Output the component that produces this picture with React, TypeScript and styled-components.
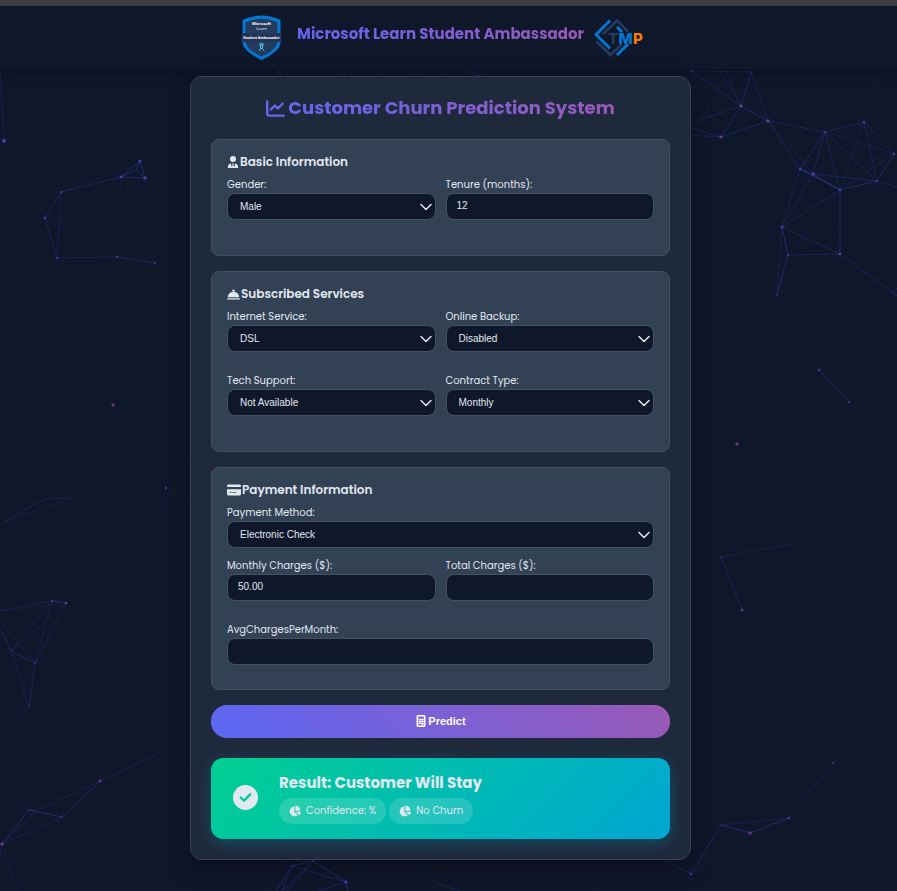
import React from "react";
import styled, { createGlobalStyle } from "styled-components";
import {
  FaBellConcierge,
  FaCalculator,
  FaChartLine,
  FaChartPie,
  FaCircleCheck,
  FaCreditCard,
  FaUserTie,
} from "react-icons/fa6";

const brandFont = `Poppins, Inter, "Open Sans", sans-serif`;
const controlFont = `"Liberation Sans", Arial, sans-serif`;

const GlobalStyle = createGlobalStyle`
  *, *::before, *::after { box-sizing: border-box; }
  body {
    margin: 0;
    background: #0f172a;
    color: #e2e8f0;
    font-family: ${brandFont};
  }
`;

const Page = styled.div`
  position: relative;
  min-height: 100vh;
  overflow: hidden;
  border-top: 6px solid #3e3f46;
`;

const Network = styled.svg`
  position: absolute;
  top: -6px;
  left: 0;
  width: 100%;
  height: 891px;
`;

const Header = styled.header`
  position: relative;
  display: flex;
  justify-content: center;
  align-items: center;
  gap: 10px;
  height: 63px;
  padding-right: 16px;
  background: #0f172a;
  box-shadow: 0 2px 10px rgba(13, 16, 32, 0.9);
`;

const BadgeArt = styled.svg`
  width: 50px;
  height: 46px;
`;

const TeamArt = styled.svg`
  width: 50px;
  height: 40px;
`;

const GradientText = styled.span`
  background: linear-gradient(45deg, #6366f1, #9b59b6);
  background-clip: text;
  -webkit-background-clip: text;
  color: transparent;
`;

const Brand = styled.h2`
  margin: 0 0 8px;
  font-size: 15px;
  line-height: 24px;
  font-weight: 700;
  white-space: nowrap;
`;

const Main = styled.main`
  position: relative;
  padding: 7px 16px 31px 0;
`;

const Card = styled.form`
  max-width: 501px;
  margin: 0 auto;
  padding: 20px;
  background: #1e293b;
  border: 1px solid #374354;
  border-radius: 12px;
  box-shadow: 0 8px 20px rgba(12, 12, 24, 0.6);
`;

const Title = styled.h1`
  display: flex;
  justify-content: center;
  align-items: center;
  gap: 3px;
  margin: 0 0 20px;
  font-size: 18px;
  line-height: 22px;
  font-weight: 700;
  color: #6366f1;
  white-space: nowrap;
`;

const Section = styled.section`
  margin-bottom: 15px;
  padding: 15px;
  background: #334155;
  border: 1px solid #43505f;
  border-radius: 8px;
`;

const SectionTitle = styled.h3`
  display: flex;
  align-items: center;
  gap: 1px;
  margin: 0 0 7px;
  font-size: 12px;
  line-height: 14px;
  font-weight: 600;
`;

const Grid = styled.div`
  display: grid;
  grid-template-columns: 1fr 1fr;
  column-gap: 10px;
`;

const FieldBox = styled.div<{ $tight?: boolean }>`
  display: flex;
  flex-direction: column;
  margin-bottom: ${(p) => (p.$tight ? 9 : 20)}px;
`;

const Label = styled.label`
  font-size: 10px;
  line-height: 17px;
`;

const Select = styled.select`
  appearance: none;
  height: 27px;
  padding: 0 24px 1px 12px;
  border: 1px solid #45525f;
  border-radius: 8px;
  color: #e2e8f0;
  font-family: ${controlFont};
  font-size: 10px;
  background: #0f172a
    url("data:image/svg+xml,%3Csvg xmlns='http://www.w3.org/2000/svg' viewBox='0 0 12 8'%3E%3Cpath d='M1 1.5l5 5 5-5' fill='none' stroke='%23e2e8f0' stroke-width='1.5' stroke-linecap='round' stroke-linejoin='round'/%3E%3C/svg%3E")
    no-repeat right 3px center / 12px 8px;
`;

const Input = styled.input`
  width: 100%;
  height: 27px;
  padding: 0 10px 2px;
  border: 1px solid #45525f;
  border-radius: 8px;
  background: #0f172a;
  color: #e2e8f0;
  font-family: ${controlFont};
  font-size: 10px;
`;

const PredictButton = styled.button`
  display: flex;
  justify-content: center;
  align-items: center;
  gap: 1px;
  width: 100%;
  height: 33px;
  padding: 0 0 1px;
  border: 0;
  border-radius: 16px;
  background: linear-gradient(45deg, #5b67f4, #9b59b6);
  color: #fff;
  font-family: ${controlFont};
  font-size: 11px;
  font-weight: 700;
`;

const Result = styled.section`
  display: flex;
  align-items: center;
  gap: 21px;
  margin-top: 20px;
  min-height: 81px;
  padding: 13px 22px 15px;
  border-radius: 12px;
  background: linear-gradient(135deg, #00d092, #00a6d2);
  box-shadow: 0 4px 15px rgba(0, 166, 210, 0.3);
`;

const ResultBody = styled.div`
  display: flex;
  flex-direction: column;
  gap: 5px;
`;

const ResultTitle = styled.h2`
  margin: 0;
  font-size: 15px;
  line-height: 21px;
  font-weight: 700;
`;

const Pills = styled.div`
  display: flex;
  gap: 3px;
`;

const Pill = styled.span`
  display: flex;
  align-items: center;
  gap: 5px;
  height: 26px;
  padding: 0 10px;
  border-radius: 13px;
  background: rgba(255, 255, 255, 0.15);
  font-size: 10px;
`;

type Line = [number, number, number, number, number];

const lines: Line[] = [
  [0, 70, 4, 141, 0.25], [4, 141, 61, 192, 0.12], [0, 138, 4, 141, 0.4],
  [61, 192, 121, 177, 0.35], [61, 192, 136, 165, 0.12], [121, 177, 140, 161, 0.5],
  [121, 177, 145, 178, 0.4], [140, 161, 145, 178, 0.5], [136, 170, 140, 161, 0.4],
  [136, 170, 145, 178, 0.4], [121, 177, 136, 170, 0.4],
  [61, 192, 45, 218, 0.35], [45, 218, 57, 258, 0.35], [61, 192, 57, 258, 0.25],
  [57, 258, 117, 257, 0.3], [117, 257, 155, 263, 0.4], [121, 177, 117, 257, 0.12],
  [145, 178, 117, 257, 0.12], [145, 178, 155, 263, 0.08], [45, 218, 117, 257, 0.1],
  [5, 522, 44, 499, 0.35], [44, 499, 71, 498, 0.35], [5, 522, 71, 498, 0.2],
  [166, 488, 144, 558, 0.15], [166, 488, 191, 502, 0.15], [166, 488, 191, 458, 0.08],
  [0, 611, 52, 601, 0.3], [0, 611, 66, 603, 0.15], [52, 601, 66, 603, 0.5],
  [0, 622, 35, 663, 0.25], [0, 629, 11, 651, 0.4], [11, 651, 35, 663, 0.4],
  [11, 651, 52, 601, 0.25], [11, 651, 66, 603, 0.2], [35, 663, 52, 601, 0.25],
  [35, 663, 66, 603, 0.25], [66, 603, 113, 666, 0.12], [35, 663, 113, 666, 0.15],
  [11, 651, 29, 708, 0.25], [35, 663, 29, 708, 0.35], [29, 708, 0, 718, 0.1],
  [29, 708, 0, 742, 0.15], [0, 781, 29, 810, 0.25], [0, 800, 29, 810, 0.12],
  [29, 810, 36, 811, 0.5], [29, 810, 62, 817, 0.5], [29, 810, 2, 844, 0.45],
  [36, 811, 2, 844, 0.35], [62, 817, 2, 844, 0.25], [62, 817, 100, 781, 0.4],
  [36, 811, 100, 781, 0.25], [100, 781, 160, 753, 0.25], [160, 753, 191, 771, 0.15],
  [2, 844, 18, 891, 0.2], [2, 844, 0, 855, 0.3],
  [692, 71, 751, 72, 0.35], [692, 71, 741, 106, 0.35], [751, 72, 741, 106, 0.4],
  [751, 72, 768, 121, 0.3], [741, 106, 768, 121, 0.45], [741, 106, 721, 137, 0.4],
  [721, 137, 768, 121, 0.35], [691, 123, 741, 106, 0.3], [691, 128, 721, 137, 0.35],
  [691, 135, 721, 137, 0.3], [692, 71, 721, 137, 0.15], [725, 70, 741, 106, 0.3],
  [719, 70, 741, 106, 0.2], [768, 121, 825, 132, 0.35], [768, 121, 800, 169, 0.35],
  [768, 121, 813, 174, 0.2], [721, 137, 800, 169, 0.1],
  [825, 132, 864, 122, 0.35], [864, 122, 894, 154, 0.35], [825, 132, 800, 169, 0.4],
  [825, 132, 813, 174, 0.35], [825, 132, 840, 190, 0.3], [825, 132, 877, 181, 0.3],
  [825, 132, 894, 154, 0.2], [864, 122, 877, 181, 0.3], [864, 122, 840, 190, 0.2],
  [864, 122, 800, 169, 0.15], [864, 122, 813, 174, 0.15], [864, 122, 884, 69, 0.1],
  [894, 154, 877, 181, 0.4], [894, 154, 840, 190, 0.25], [894, 154, 813, 174, 0.12],
  [800, 169, 813, 174, 0.5], [800, 169, 840, 190, 0.6], [813, 174, 840, 190, 0.5],
  [813, 174, 877, 181, 0.35], [840, 190, 877, 181, 0.45], [877, 181, 897, 187, 0.35],
  [800, 169, 782, 227, 0.3], [813, 174, 782, 227, 0.3], [840, 190, 782, 227, 0.3],
  [840, 190, 840, 254, 0.4], [840, 190, 788, 255, 0.15], [813, 174, 840, 254, 0.12],
  [877, 181, 840, 254, 0.15], [782, 227, 840, 254, 0.35], [782, 227, 788, 255, 0.45],
  [782, 227, 777, 295, 0.3], [788, 255, 777, 295, 0.4], [788, 255, 840, 254, 0.35],
  [777, 295, 840, 254, 0.15], [840, 254, 893, 293, 0.35], [893, 293, 897, 288, 0.4],
  [893, 293, 897, 296, 0.5], [777, 295, 819, 370, 0.1], [819, 370, 849, 402, 0.4],
  [721, 557, 791, 544, 0.25], [721, 557, 742, 610, 0.35], [791, 544, 742, 610, 0.12],
  [721, 825, 789, 818, 0.25], [721, 825, 750, 833, 0.5], [750, 833, 789, 818, 0.45],
  [789, 818, 833, 763, 0.25], [721, 825, 691, 874, 0.4], [750, 833, 691, 874, 0.2],
  [721, 825, 691, 836, 0.15], [721, 825, 691, 773, 0.1], [833, 763, 897, 796, 0.07],
  [292, 866, 313, 861, 0.5], [292, 866, 346, 882, 0.4], [313, 861, 346, 882, 0.5],
  [292, 866, 276, 891, 0.45], [292, 866, 282, 891, 0.4], [313, 861, 282, 891, 0.4],
  [313, 861, 287, 891, 0.35], [346, 882, 348, 891, 0.5], [346, 882, 318, 891, 0.3],
  [346, 882, 366, 860, 0.2], [282, 860, 292, 866, 0.3], [251, 860, 260, 891, 0.12],
  [255, 860, 270, 891, 0.12], [421, 860, 436, 883, 0.2], [436, 883, 460, 891, 0.3],
  [640, 860, 598, 891, 0.15], [666, 860, 691, 874, 0.4],
  [278, 69, 281, 76, 0.5], [281, 69, 276, 76, 0.2], [346, 69, 339, 76, 0.25],
  [353, 69, 351, 76, 0.4], [373, 69, 383, 76, 0.35], [413, 69, 410, 76, 0.35],
  [427, 69, 420, 76, 0.3], [464, 69, 478, 76, 0.45], [490, 69, 478, 76, 0.45],
  [455, 69, 440, 76, 0.2], [478, 69, 478, 76, 0.4],
];

const indigo = "#4f56d8";
const purple = "#8e4ba6";
const dots: [number, number, number, string][] = [
  [4, 141, 2, indigo], [61, 192, 1, purple], [121, 177, 1.5, indigo],
  [140, 161, 1.5, indigo], [145, 178, 1.8, indigo], [45, 218, 1.2, indigo],
  [57, 258, 1, indigo], [117, 257, 1, indigo], [155, 263, 1, indigo],
  [113, 405, 1.7, purple], [166, 488, 1.2, indigo], [52, 601, 1, purple],
  [66, 603, 1.3, purple], [35, 663, 0.8, indigo], [100, 781, 1.5, purple],
  [2, 844, 1.7, purple], [62, 817, 0.8, indigo], [692, 71, 1.3, indigo],
  [751, 72, 1, indigo], [741, 106, 1.6, purple], [768, 121, 1.7, purple],
  [721, 137, 1.6, purple], [825, 132, 1, indigo], [864, 122, 1.2, indigo],
  [894, 154, 1.2, indigo], [800, 169, 1.2, indigo], [813, 174, 1.5, purple],
  [840, 190, 1.2, indigo], [877, 181, 1, indigo], [782, 227, 1.4, indigo],
  [788, 255, 1, indigo], [840, 254, 1.3, purple], [777, 295, 0.8, indigo],
  [819, 370, 1.3, indigo], [849, 402, 1, indigo], [737, 444, 1.7, purple],
  [742, 610, 1.6, purple], [721, 557, 0.8, indigo], [833, 763, 0.9, indigo],
  [789, 818, 1.2, purple], [750, 833, 1.8, purple], [691, 874, 1.2, indigo],
  [313, 861, 1.1, indigo], [346, 882, 1.6, indigo], [292, 866, 0.8, indigo],
];

function NetworkBackdrop() {
  return (
    <Network viewBox="0 0 897 891" preserveAspectRatio="xMidYMin slice" aria-hidden="true">
      <g stroke="#3f46cc" strokeWidth="1" opacity="0.85">
        {lines.map(([x1, y1, x2, y2, o], i) => (
          <line key={i} x1={x1} y1={y1} x2={x2} y2={y2} strokeOpacity={o} />
        ))}
      </g>
      {dots.map(([cx, cy, r, fill], i) => (
        <circle key={i} cx={cx} cy={cy} r={r} fill={fill} fillOpacity={0.65} />
      ))}
    </Network>
  );
}

function AmbassadorBadge() {
  return (
    <BadgeArt viewBox="0 0 50 46" role="img" aria-label="Microsoft Learn badge">
      <path d="M5.500 5Q24.500 -4 43.500 5V27Q43.500 36 24.500 45Q5.500 36 5.500 27Z" fill="#0078d4" />
      <path d="M8.500 7.500Q24.500 0 40.500 7.500V26Q40.500 34.500 24.500 41.500Q8.500 34.500 8.500 26Z" fill="#243a5e" />
      <path d="M5 18H44L45 27H4Z" fill="#203558" />
      <g fill="#fff" textAnchor="middle" fontFamily="Open Sans, sans-serif">
        <text x="24.500" y="10" fontSize="4" fontWeight="700">Microsoft</text>
        <text x="24.500" y="14.500" fontSize="4">Learn</text>
        <text x="24.500" y="24" fontSize="3.500" fontWeight="700">Student Ambassador</text>
      </g>
      <g stroke="#50c8e8" strokeWidth="0.9" fill="none">
        <circle cx="24.500" cy="29" r="1" />
        <path d="M22 28.500l1.500 2.500h2L27 28.500M23.500 31V33.500L22 36M25.500 31V33.500L27 36M23.500 33.500h2" />
      </g>
    </BadgeArt>
  );
}

function TeamLogo() {
  return (
    <TeamArt viewBox="0 0 50 40" role="img" aria-label="TMP">
      <g fill="none" strokeWidth="3">
        <path d="M16 2.500L2 16.500L16 30.500" stroke="#0078d4" />
        <path d="M9 16L23 2.500L34 13.500" stroke="#243a5e" />
        <path d="M2.500 23.500L16.500 37L28 26" stroke="#243a5e" />
        <path d="M23 37L34 26" stroke="#0078d4" />
        <path d="M23 9L28 14" stroke="#0078d4" />
      </g>
      <g fontFamily="Inter, sans-serif" fontSize="15" fontWeight="800">
        <text x="14" y="26" fill="#243a5e">T</text>
        <text x="24.500" y="26" fill="#0078d4">M</text>
        <text x="39" y="26" fill="#ff7a00">P</text>
      </g>
    </TeamArt>
  );
}

type FieldProps = {
  id: string;
  label: string;
  value?: string;
  options?: string[];
  tight?: boolean;
};

function Field({ id, label, value = "", options, tight }: FieldProps) {
  return (
    <FieldBox $tight={tight}>
      <Label htmlFor={id}>{label}</Label>
      {options ? (
        <Select id={id} defaultValue={options[0]}>
          {options.map((o) => (
            <option key={o}>{o}</option>
          ))}
        </Select>
      ) : (
        <Input id={id} type="text" inputMode="decimal" defaultValue={value} />
      )}
    </FieldBox>
  );
}

export default function App() {
  return (
    <Page>
      <GlobalStyle />
      <NetworkBackdrop />
      <Header>
        <AmbassadorBadge />
        <Brand>
          <GradientText>Microsoft Learn Student Ambassador</GradientText>
        </Brand>
        <TeamLogo />
      </Header>
      <Main>
        <Card onSubmit={(e) => e.preventDefault()}>
          <Title>
            <FaChartLine size={19} />
            <GradientText>Customer Churn Prediction System</GradientText>
          </Title>

          <Section>
            <SectionTitle>
              <FaUserTie size={12} />
              Basic Information
            </SectionTitle>
            <Grid>
              <Field id="gender" label="Gender:" options={["Male", "Female"]} />
              <Field id="tenure" label="Tenure (months):" value="12" />
            </Grid>
          </Section>

          <Section>
            <SectionTitle>
              <FaBellConcierge size={13} />
              Subscribed Services
            </SectionTitle>
            <Grid>
              <Field id="internet" label="Internet Service:" options={["DSL", "Fiber Optic", "None"]} />
              <Field id="backup" label="Online Backup:" options={["Disabled", "Enabled"]} />
              <Field id="support" label="Tech Support:" options={["Not Available", "Available"]} />
              <Field id="contract" label="Contract Type:" options={["Monthly", "One Year", "Two Year"]} />
            </Grid>
          </Section>

          <Section>
            <SectionTitle>
              <FaCreditCard size={14} />
              Payment Information
            </SectionTitle>
            <Field id="method" label="Payment Method:" options={["Electronic Check", "Mailed Check"]} tight />
            <Grid>
              <Field id="monthly" label="Monthly Charges ($):" value="50.00" />
              <Field id="total" label="Total Charges ($):" />
            </Grid>
            <Field id="average" label="AvgChargesPerMonth:" tight />
          </Section>

          <PredictButton type="submit">
            <FaCalculator size={12} />
            Predict
          </PredictButton>

          <Result>
            <FaCircleCheck size={25} />
            <ResultBody>
              <ResultTitle>Result: Customer Will Stay</ResultTitle>
              <Pills>
                <Pill>
                  <FaChartPie size={12} />
                  Confidence: %
                </Pill>
                <Pill>
                  <FaChartPie size={12} />
                  No Churn
                </Pill>
              </Pills>
            </ResultBody>
          </Result>
        </Card>
      </Main>
    </Page>
  );
}
